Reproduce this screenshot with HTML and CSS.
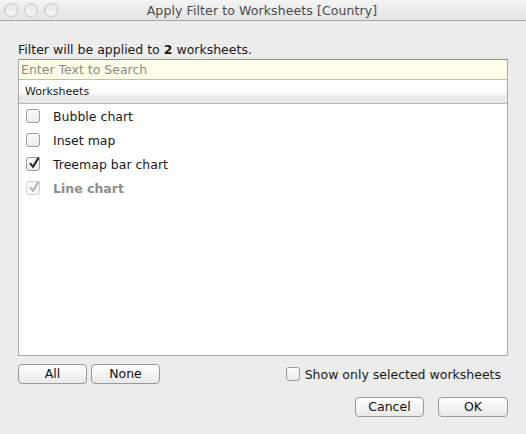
FILE: index.html
```html
<!DOCTYPE html>
<html>
<head>
<meta charset="utf-8">
<link rel="stylesheet" href="styles.css">
</head>
<body>
<div class="window">
  <div class="titlebar">
    <div class="lights">
      <span class="light"></span><span class="light"></span><span class="light"></span>
    </div>
    <div class="title">Apply Filter to Worksheets [Country]</div>
  </div>
  <div class="content">
    <div class="msg">Filter will be applied to <b>2</b> worksheets.</div>
    <div class="frame">
      <div class="search">Enter Text to Search</div>
      <div class="header">Worksheets</div>
      <div class="list">
        <div class="row"><span class="cb"></span><span class="label">Bubble chart</span></div>
        <div class="row"><span class="cb"></span><span class="label">Inset map</span></div>
        <div class="row"><span class="cb"><svg viewBox="0 0 14 14" class="check"><path d="M3 7.2 L6 10.8 L11.8 1.4" /></svg></span><span class="label">Treemap bar chart</span></div>
        <div class="row disabled"><span class="cb"><svg viewBox="0 0 14 14" class="check"><path d="M3 7.2 L6 10.8 L11.8 1.4" /></svg></span><span class="label">Line chart</span></div>
      </div>
    </div>
    <div class="controls">
      <div class="btn small">All</div>
      <div class="btn small">None</div>
      <div class="spacer"></div>
      <div class="showonly"><span class="cb round"></span><span>Show only selected worksheets</span></div>
    </div>
    <div class="actions">
      <div class="btn">Cancel</div>
      <div class="btn ok">OK</div>
    </div>
  </div>
</div>
</body>
</html>
```
FILE: styles.css
```css
html, body {
  margin: 0;
  padding: 0;
}
body {
  width: 526px;
  height: 434px;
  background: #ececec;
  font-family: "DejaVu Sans", "Liberation Sans", sans-serif;
  font-size: 12.5px;
  color: #1a1a1a;
  overflow: hidden;
}
.window {
  width: 526px;
  height: 434px;
}
.titlebar {
  height: 20px;
  border-bottom: 1px solid #a7a7a7;
  background: linear-gradient(#f4f4f4, #e3e3e3);
  display: flex;
  align-items: center;
  position: relative;
}
.lights {
  display: flex;
  gap: 6px;
  padding-left: 4px;
}
.light {
  width: 12px;
  height: 12px;
  border-radius: 50%;
  border: 1px solid #c4c4c4;
  background: linear-gradient(#e6e6e6, #f6f6f6);
}
.title {
  flex: 1;
  text-align: center;
  color: #4a4a4a;
  font-size: 12.5px;
  padding-right: 60px;
  letter-spacing: 0.1px;
}
.content {
  padding: 0 18px;
}
.msg {
  margin-top: 19px;
  height: 19px;
  line-height: 19px;
}
.frame {
  border: 1px solid #a8a8a8;
  border-top-color: #8e8e8e;
  background: #fff;
}
.search {
  height: 19px;
  line-height: 19px;
  background: #fefee9;
  color: #8a8a8a;
  padding-left: 2px;
  border-bottom: 1px solid #bdbdbd;
}
.header {
  height: 23px;
  line-height: 23px;
  font-size: 11px;
  padding-left: 6px;
  background: linear-gradient(#ffffff 0%, #fdfdfd 55%, #ececec 70%, #e8e8e8 100%);
  border-bottom: 1px solid #b5b5b5;
}
.list {
  height: 251px;
  padding-top: 0;
  box-sizing: border-box;
}
.row {
  height: 24px;
  display: flex;
  align-items: center;
  padding-left: 7px;
}
.cb {
  width: 12px;
  height: 12px;
  border: 1px solid #9c9c9c;
  border-radius: 3px;
  background: linear-gradient(#fbfbfb, #ececec);
  position: relative;
  flex: none;
}
.check {
  position: absolute;
  left: 0;
  top: -2px;
  width: 14px;
  height: 14px;
  fill: none;
  stroke: #222;
  stroke-width: 2;
}
.label {
  margin-left: 13px;
}
.disabled .label {
  color: #8d8d8d;
  font-weight: bold;
}
.disabled .cb {
  border-color: #cfcfcf;
  background: #f7f7f7;
}
.disabled .check {
  stroke: #b4b4b4;
}
.controls {
  display: flex;
  align-items: center;
  margin-top: 8px;
  height: 20px;
}
.btn {
  width: 67px;
  height: 18px;
  border: 1px solid #9a9a9a;
  border-radius: 4px;
  background: linear-gradient(#ffffff, #f1f1f1 60%, #e9e9e9);
  text-align: center;
  line-height: 18px;
  font-size: 12.5px;
  color: #111;
}
.small + .small {
  margin-left: 4px;
}
.spacer {
  flex: 1;
}
.showonly {
  display: flex;
  align-items: center;
  margin-right: 7px;
}
.showonly .cb {
  margin-right: 5px;
  border-radius: 3px;
}
.actions {
  display: flex;
  justify-content: flex-end;
  gap: 14px;
  margin-top: 13px;
}
.ok {
  width: 68px;
}
```
